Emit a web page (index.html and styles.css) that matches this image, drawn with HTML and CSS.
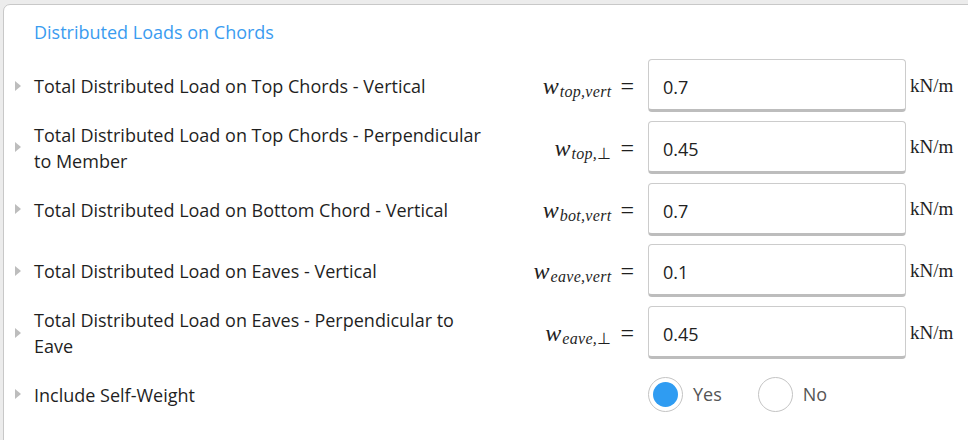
FILE: index.html
```html
<!DOCTYPE html>
<html>
<head>
<meta charset="utf-8">
<link rel="stylesheet" href="styles.css">
</head>
<body>
<div class="card">
  <div class="title">Distributed Loads on Chords</div>

  <div class="row">
    <span class="arrow"></span>
    <div class="label">Total Distributed Load on Top Chords - Vertical</div>
    <div class="math"><span class="w">w</span><span class="sub">top,vert</span><span class="eq">=</span></div>
    <div class="input">0.7</div>
    <div class="unit">kN/m</div>
  </div>

  <div class="row">
    <span class="arrow"></span>
    <div class="label">Total Distributed Load on Top Chords - Perpendicular to Member</div>
    <div class="math"><span class="w">w</span><span class="sub">top,<span class="up">⊥</span></span><span class="eq">=</span></div>
    <div class="input">0.45</div>
    <div class="unit">kN/m</div>
  </div>

  <div class="row">
    <span class="arrow"></span>
    <div class="label">Total Distributed Load on Bottom Chord - Vertical</div>
    <div class="math"><span class="w">w</span><span class="sub">bot,vert</span><span class="eq">=</span></div>
    <div class="input">0.7</div>
    <div class="unit">kN/m</div>
  </div>

  <div class="row">
    <span class="arrow"></span>
    <div class="label">Total Distributed Load on Eaves - Vertical</div>
    <div class="math"><span class="w">w</span><span class="sub">eave,vert</span><span class="eq">=</span></div>
    <div class="input">0.1</div>
    <div class="unit">kN/m</div>
  </div>

  <div class="row">
    <span class="arrow"></span>
    <div class="label">Total Distributed Load on Eaves - Perpendicular to Eave</div>
    <div class="math"><span class="w">w</span><span class="sub">eave,<span class="up">⊥</span></span><span class="eq">=</span></div>
    <div class="input">0.45</div>
    <div class="unit">kN/m</div>
  </div>

  <div class="row">
    <span class="arrow"></span>
    <div class="label">Include Self-Weight</div>
    <div class="math"></div>
    <div class="radios">
      <span class="radio checked"></span><span class="rlabel">Yes</span>
      <span class="radio"></span><span class="rlabel">No</span>
    </div>
    <div></div>
  </div>
</div>
</body>
</html>
```
FILE: styles.css
```css
html, body {
  margin: 0;
  padding: 0;
  background: #ececec;
  overflow: hidden;
  height: 440px;
}

.card {
  margin: 4px -20px 0 3px;
  height: 480px;
  background: #fff;
  border: 1px solid #c8c8c8;
  border-radius: 7px;
  padding: 15px 0 0 10px;
  font-family: "Open Sans", "Liberation Sans", sans-serif;
  color: #1f1f1f;
  box-sizing: border-box;
}

.title {
  margin-left: 20px;
  font-size: 18px;
  line-height: 24px;
  color: #3a9cf0;
  margin-bottom: 15px;
}

.row {
  display: grid;
  grid-template-columns: 20px 460px 154px 258px auto;
  column-gap: 0;
  align-items: center;
  height: 53px;
  margin-bottom: 8.75px;
}

.arrow {
  width: 0;
  height: 0;
  border-top: 5px solid transparent;
  border-bottom: 5px solid transparent;
  border-left: 6px solid #bdbdbd;
  margin-left: 1px;
}

.label {
  font-size: 18px;
  line-height: 26px;
  padding-right: 10px;
  padding-top: 1px;
}

.math {
  text-align: right;
  padding-right: 14px;
  font-family: "Liberation Serif", serif;
  white-space: nowrap;
  padding-top: 2px;
}

.math .w {
  font-style: italic;
  font-size: 24px;
}

.math .sub {
  font-style: italic;
  font-size: 16px;
  position: relative;
  top: 3px;
  margin-left: 1px;
  letter-spacing: 0.3px;
}

.math .up {
  font-style: normal;
}

.math .eq {
  font-size: 24px;
  margin-left: 9px;
}

.input {
  width: 258px;
  height: 53px;
  box-sizing: border-box;
  border: 1px solid #cccccc;
  border-bottom: 3px solid #bdbdbd;
  border-radius: 4px;
  padding: 2px 0 0 14px;
  font-size: 18px;
  line-height: 50px;
  color: #222;
}

.unit {
  font-family: "Liberation Serif", serif;
  font-size: 19px;
  padding-left: 4px;
}

.radios {
  display: flex;
  align-items: center;
}

.radio {
  width: 35px;
  height: 35px;
  box-sizing: border-box;
  border: 1px solid #c4c4c4;
  border-radius: 50%;
  background: #fff;
  display: flex;
  align-items: center;
  justify-content: center;
}

.radio.checked::after {
  content: "";
  width: 25px;
  height: 25px;
  border-radius: 50%;
  background: #2f9cf2;
}

.rlabel {
  font-size: 18px;
  color: #555;
  margin-left: 10px;
  margin-right: 36px;
}
```
